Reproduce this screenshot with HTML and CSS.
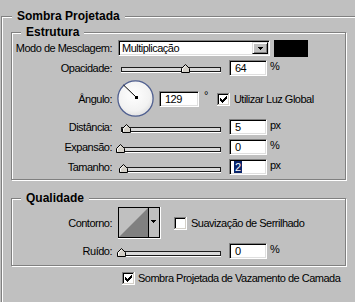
FILE: index.html
```html
<!DOCTYPE html>
<html lang="pt">
<head>
<meta charset="utf-8">
<title>Sombra Projetada</title>
<link rel="stylesheet" href="styles.css">
</head>
<body>
<fieldset class="group outer">
  <legend class="title title-outer">Sombra Projetada</legend>

  <fieldset class="group inner estrutura">
    <legend class="title">Estrutura</legend>

    <div class="row row-mode">
      <span class="lbl">Modo de Mesclagem:</span>
      <div class="select">
        <span class="sel-text">Multiplicação</span>
        <span class="sel-btn"><svg width="5" height="3" viewBox="0 0 5 3" shape-rendering="crispEdges"><path d="M0 0h5v1H0zM1 1h3v1H1zM2 2h1v1H2z" fill="#000"/></svg></span>
      </div>
      <div class="swatch"></div>
    </div>

    <div class="row row-opac">
      <span class="lbl">Opacidade:</span>
      <div class="slider">
        <div class="track"></div>
        <svg class="thumb" style="left:60px" width="9" height="9" viewBox="0 0 9 9"><polygon points="0.5,8.5 0.5,4.5 4.5,0.5 8.5,4.5 8.5,8.5" fill="#d4d0c8" stroke="#000"/><polyline points="1.5,7.5 1.5,4.9 4.5,1.9" fill="none" stroke="#fff"/></svg>
      </div>
      <div class="field">64</div><span class="unit">%</span>
    </div>

    <div class="row row-angle">
      <span class="lbl">Ângulo:</span>
      <svg class="dial" width="38" height="38" viewBox="0 0 38 38">
        <defs>
          <radialGradient id="dg" cx="0.45" cy="0.4" r="0.65">
            <stop offset="0" stop-color="#ffffff"/>
            <stop offset="0.7" stop-color="#f2f2f2"/>
            <stop offset="1" stop-color="#dcdcdc"/>
          </radialGradient>
        </defs>
        <circle cx="18.5" cy="18.5" r="17.6" fill="url(#dg)" stroke="#4f5f90" stroke-width="1.3"/>
        <line x1="19.5" y1="17.5" x2="6.5" y2="5" stroke="#000" stroke-width="1"/>
        <rect x="18" y="16" width="3" height="3" fill="#000"/>
      </svg>
      <div class="field field-angle">129</div><span class="deg">°</span>
      <svg class="check check-global" width="13" height="13" viewBox="0 0 13 13" shape-rendering="crispEdges"><rect width="13" height="13" fill="#fff"/><path d="M0 0h12v1H1v11H0z" fill="#808080"/><path d="M1 1h10v1H2v9H1z" fill="#000"/><path d="M12 0h1v13H0v-1h12z" fill="#fff"/><path d="M11 1h1v11H1v-1h10z" fill="#d4d0c8"/><path d="M3 5h1v3H3zM4 6h1v3H4zM5 7h1v3H5zM6 6h1v3H6zM7 5h1v3H7zM8 4h1v3H8zM9 3h1v3H9z" fill="#000"/></svg>
      <span class="check-text">Utilizar Luz Global</span>
    </div>

    <div class="row row-dist">
      <span class="lbl">Distância:</span>
      <div class="slider">
        <div class="track track-low"></div>
        <svg class="thumb thumb-low" style="left:1px" width="9" height="9" viewBox="0 0 9 9"><polygon points="0.5,8.5 0.5,4.5 4.5,0.5 8.5,4.5 8.5,8.5" fill="#d4d0c8" stroke="#000"/><polyline points="1.5,7.5 1.5,4.9 4.5,1.9" fill="none" stroke="#fff"/></svg>
      </div>
      <div class="field">5</div><span class="unit">px</span>
    </div>

    <div class="row row-exp">
      <span class="lbl">Expansão:</span>
      <div class="slider">
        <div class="track track-low"></div>
        <svg class="thumb thumb-low" style="left:-5px" width="9" height="9" viewBox="0 0 9 9"><polygon points="0.5,8.5 0.5,4.5 4.5,0.5 8.5,4.5 8.5,8.5" fill="#d4d0c8" stroke="#000"/><polyline points="1.5,7.5 1.5,4.9 4.5,1.9" fill="none" stroke="#fff"/></svg>
      </div>
      <div class="field">0</div><span class="unit">%</span>
    </div>

    <div class="row row-size">
      <span class="lbl">Tamanho:</span>
      <div class="slider">
        <div class="track track-low"></div>
        <svg class="thumb thumb-low" style="left:-2px" width="9" height="9" viewBox="0 0 9 9"><polygon points="0.5,8.5 0.5,4.5 4.5,0.5 8.5,4.5 8.5,8.5" fill="#d4d0c8" stroke="#000"/><polyline points="1.5,7.5 1.5,4.9 4.5,1.9" fill="none" stroke="#fff"/></svg>
      </div>
      <div class="field field-sel"><span class="selected">2</span></div><span class="unit">px</span>
    </div>
  </fieldset>

  <fieldset class="group inner qualidade">
    <legend class="title">Qualidade</legend>

    <div class="row row-contour">
      <span class="lbl">Contorno:</span>
      <svg class="contour" width="43" height="32" viewBox="0 0 43 32" shape-rendering="crispEdges">
        <rect x="0" y="0" width="42" height="31" fill="#c0c0c0"/>
        <polygon points="1,30 30,1 30,30" fill="#808080" shape-rendering="auto"/>
        <path d="M0 0h42v1H0zM0 0h1v31H0zM0 30h42v1H0zM41 0h1v31h-1zM30 0h1v31h-1z" fill="#000"/>
        <path d="M42 0h1v32H0v-1h42z" fill="#fff"/>
        <path d="M33 13h5v1h-5zM34 14h3v1h-3zM35 15h1v1h-1z" fill="#000"/>
      </svg>
      <svg class="check check-aa" width="13" height="13" viewBox="0 0 13 13" shape-rendering="crispEdges"><rect width="13" height="13" fill="#fff"/><path d="M0 0h12v1H1v11H0z" fill="#808080"/><path d="M1 1h10v1H2v9H1z" fill="#000"/><path d="M12 0h1v13H0v-1h12z" fill="#fff"/><path d="M11 1h1v11H1v-1h10z" fill="#d4d0c8"/></svg>
      <span class="check-text">Suavização de Serrilhado</span>
    </div>

    <div class="row row-noise">
      <span class="lbl">Ruído:</span>
      <div class="slider">
        <div class="track track-low"></div>
        <svg class="thumb thumb-low" style="left:-4px" width="9" height="9" viewBox="0 0 9 9"><polygon points="0.5,8.5 0.5,4.5 4.5,0.5 8.5,4.5 8.5,8.5" fill="#d4d0c8" stroke="#000"/><polyline points="1.5,7.5 1.5,4.9 4.5,1.9" fill="none" stroke="#fff"/></svg>
      </div>
      <div class="field">0</div><span class="unit">%</span>
    </div>
  </fieldset>

  <div class="row row-knock">
    <svg class="check" width="13" height="13" viewBox="0 0 13 13" shape-rendering="crispEdges"><rect width="13" height="13" fill="#fff"/><path d="M0 0h12v1H1v11H0z" fill="#808080"/><path d="M1 1h10v1H2v9H1z" fill="#000"/><path d="M12 0h1v13H0v-1h12z" fill="#fff"/><path d="M11 1h1v11H1v-1h10z" fill="#d4d0c8"/><path d="M3 5h1v3H3zM4 6h1v3H4zM5 7h1v3H5zM6 6h1v3H6zM7 5h1v3H7zM8 4h1v3H8zM9 3h1v3H9z" fill="#000"/></svg>
    <span class="check-text knock-text">Sombra Projetada de Vazamento de Camada</span>
  </div>
</fieldset>
</body>
</html>
```

FILE: styles.css
```css
html, body {
  margin: 0;
  padding: 0;
}
body {
  width: 355px;
  height: 302px;
  overflow: hidden;
  background: #c0c0c0;
  color: #000;
  font-family: "Liberation Sans", Arial, sans-serif;
  font-size: 11px;
  letter-spacing: -0.5px;
  line-height: 13px;
}

.group {
  margin: 0;
  padding: 0;
  min-width: 0;
  border: 1px solid #808080;
  box-shadow: inset 1px 1px 0 #fff, 1px 1px 0 #fff;
}

.title {
  padding: 0 5px;
  font-weight: bold;
  font-size: 12px;
  letter-spacing: 0;
  line-height: 13px;
  background: #c0c0c0;
}

.outer {
  margin: 10px 0 0 1px;
  width: 352px;
  padding: 3px 0 40px 9px;
  border-right-color: transparent;
  box-shadow: inset 1px 1px 0 #fff;
}
.title-outer {
  margin-left: 1px;
}

.inner {
  width: 335px;
  box-sizing: border-box;
}
.inner .title {
  margin-left: 9px;
}

.estrutura {
  padding: 1px 0 4px 0;
}
.qualidade {
  margin-top: 12px;
  padding: 2px 0 6px 0;
}

.row {
  display: flex;
  align-items: center;
}
.lbl {
  width: 100px;
  flex: none;
  text-align: right;
  white-space: nowrap;
}

.row-mode { height: 17px; }
.row-opac { height: 16px; margin-top: 3px; }
.row-angle { height: 38px; margin-top: 4px; }
.row-dist { height: 16px; margin-top: 1px; }
.row-exp { height: 16px; margin-top: 4px; }
.row-size { height: 16px; margin-top: 4px; }
.row-contour { height: 32px; }
.row-noise { height: 16px; margin-top: 4px; }
.row-knock { height: 13px; margin: 6px 0 0 111px; }

/* dropdown */
.select {
  margin-left: 6px;
  width: 152px;
  height: 16px;
  box-sizing: border-box;
  display: flex;
  align-items: center;
  background: #fff;
  border-style: solid;
  border-width: 1px;
  border-color: #808080 #fff #fff #808080;
  box-shadow: inset 1px 1px 0 #000, inset -1px -1px 0 #dfdfdf;
  align-self: flex-start;
}
.sel-text {
  flex: 1;
  padding-left: 3px;
  line-height: 13px;
}
.sel-btn {
  width: 16px;
  height: 12px;
  box-sizing: border-box;
  margin-right: 1px;
  display: flex;
  align-items: center;
  justify-content: center;
  background: #c0c0c0;
  border-style: solid;
  border-width: 1px;
  border-color: #dfdfdf #000 #000 #dfdfdf;
  box-shadow: inset 1px 1px 0 #fff, inset -1px -1px 0 #808080;
}
.swatch {
  margin-left: 4px;
  width: 34px;
  height: 17px;
  background: #000;
}

/* slider */
.slider {
  position: relative;
  margin-left: 9px;
  width: 100px;
  height: 16px;
  flex: none;
}
.track {
  margin-top: 7px;
  height: 5px;
  box-sizing: border-box;
  background: #dadada;
  border: 1px solid #1c1c1c;
  box-shadow: 0 1px 0 #fff;
}
.track-low {
  margin-top: 8px;
}
.thumb {
  position: absolute;
  top: 4px;
}
.thumb-low {
  top: 5px;
}

/* text fields */
.field {
  margin-left: 8px;
  width: 38px;
  height: 16px;
  box-sizing: border-box;
  padding-left: 5px;
  line-height: 14px;
  background: #fff;
  border-style: solid;
  border-width: 1px;
  border-color: #808080 #fff #fff #808080;
  box-shadow: inset 1px 1px 0 #000, inset -1px -1px 0 #dfdfdf;
  flex: none;
}
.field-angle {
  margin-left: 4px;
  width: 40px;
}
.selected {
  background: #0a246a;
  color: #fff;
  padding: 0 1px;
  margin-left: -1px;
}
.unit {
  margin-left: 3px;
  align-self: flex-start;
  line-height: 13px;
}
.deg {
  margin-left: 5px;
  align-self: flex-start;
  margin-top: 9px;
}

/* dial */
.dial {
  margin-left: 5px;
  flex: none;
}

/* checkboxes */
.check {
  flex: none;
  margin-left: 13px;
}
.check-global {
  margin-left: 9px;
}
.row-knock .check {
  margin-left: 0;
}
.check-aa {
  margin-left: 13px;
}
.check-text {
  margin-left: 4px;
  white-space: nowrap;
}
.knock-text {
  margin-left: 3px;
}

/* contour */
.contour {
  margin-left: 6px;
  flex: none;
}
```
